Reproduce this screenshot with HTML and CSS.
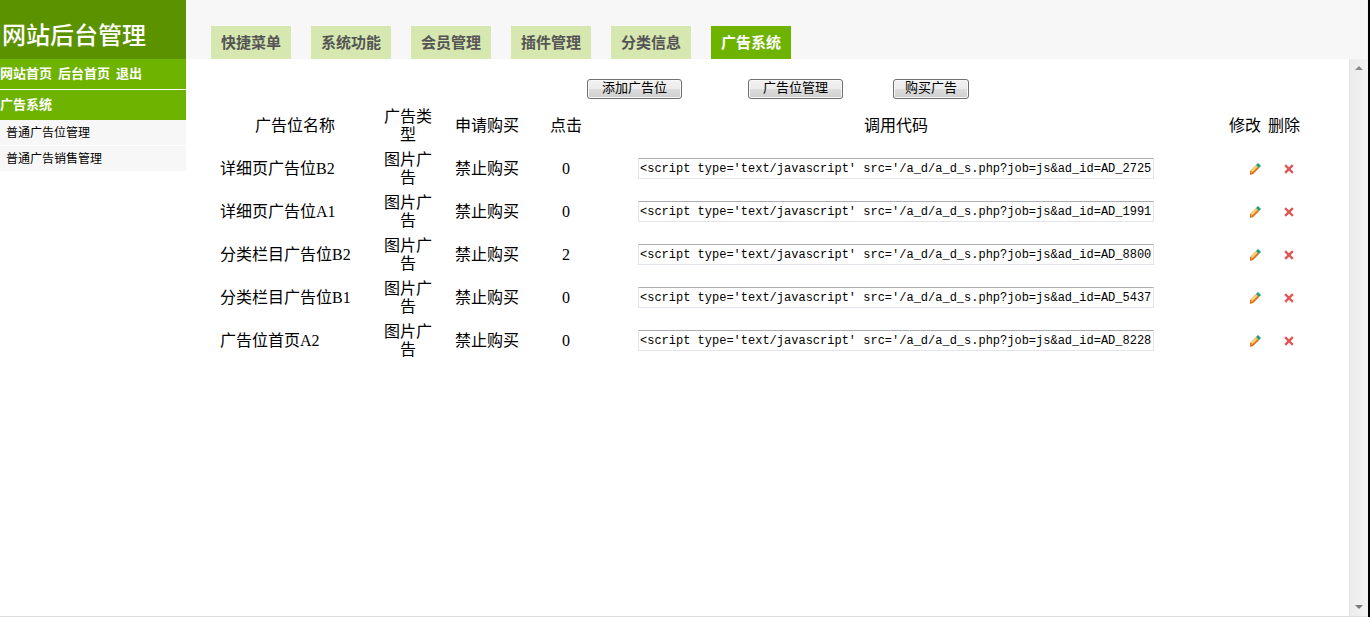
FILE: index.html
```html
<!DOCTYPE html>
<html lang="zh-CN">
<head>
  <meta charset="UTF-8">
  <title>网站后台管理</title>
  <link rel="stylesheet" href="styles.css">
</head>
<body>
  <svg class="defs" width="0" height="0">
    <symbol id="edit" viewBox="0 0 12 12">
      <path d="M1 8L7 2L10 5L4 11L1 11Z" fill="#f7a23b"/>
      <path d="M2 8L7 3L8 4L3 9Z" fill="#ffe08a"/>
      <path d="M3 10L9 4L10 5L4 11Z" fill="#d9711c"/>
      <path d="M7 2L9 0L12 3L10 5Z" fill="#1f9e78"/>
      <path d="M1 8L2 8L4 10L4 11L1 12Z" fill="#e0701c"/>
      <path d="M2 9L3 10L2 10Z" fill="#fff3d0"/>
    </symbol>
    <symbol id="del" viewBox="0 0 10 10">
      <path d="M2 2L8 8M8 2L2 8" stroke="#e05555" stroke-width="2.4" stroke-linecap="square"/>
    </symbol>
  </svg>

  <div class="sidebar">
    <h1>网站后台管理</h1>
    <div class="links">
      <a href="#">网站首页</a>
      <a href="#">后台首页</a>
      <a href="#">退出</a>
    </div>
    <h2>广告系统</h2>
    <ul>
      <li><a href="#">普通广告位管理</a></li>
      <li><a href="#">普通广告销售管理</a></li>
    </ul>
  </div>

  <div class="main">
    <div class="tabs">
      <a href="#">快捷菜单</a>
      <a href="#">系统功能</a>
      <a href="#">会员管理</a>
      <a href="#">插件管理</a>
      <a href="#">分类信息</a>
      <a href="#" class="on">广告系统</a>
    </div>
    <div class="frame">
      <div class="content">
        <div class="buttons">
          <button type="button" class="add">添加广告位</button>
          <button type="button">广告位管理</button>
          <button type="button" class="buy">购买广告</button>
        </div>
        <table>
          <tr>
            <th class="name">广告位名称</th>
            <th class="type">广告类型</th>
            <th class="apply">申请购买</th>
            <th class="click">点击</th>
            <th>调用代码</th>
            <th class="edit">修改</th>
            <th class="del">删除</th>
          </tr>
          <tr>
            <td class="name">详细页广告位B2</td>
            <td class="type">图片广告</td>
            <td>禁止购买</td>
            <td>0</td>
            <td><input type="text" aria-label="调用代码" value="&lt;script type='text/javascript' src='/a_d/a_d_s.php?job=js&amp;ad_id=AD_2725"></td>
            <td class="edit"><a href="#" aria-label="修改"><svg width="12" height="12"><use href="#edit"/></svg></a></td>
            <td class="del"><a href="#" aria-label="删除"><svg width="10" height="10"><use href="#del"/></svg></a></td>
          </tr>
          <tr>
            <td class="name">详细页广告位A1</td>
            <td class="type">图片广告</td>
            <td>禁止购买</td>
            <td>0</td>
            <td><input type="text" aria-label="调用代码" value="&lt;script type='text/javascript' src='/a_d/a_d_s.php?job=js&amp;ad_id=AD_1991"></td>
            <td class="edit"><a href="#" aria-label="修改"><svg width="12" height="12"><use href="#edit"/></svg></a></td>
            <td class="del"><a href="#" aria-label="删除"><svg width="10" height="10"><use href="#del"/></svg></a></td>
          </tr>
          <tr>
            <td class="name">分类栏目广告位B2</td>
            <td class="type">图片广告</td>
            <td>禁止购买</td>
            <td>2</td>
            <td><input type="text" aria-label="调用代码" value="&lt;script type='text/javascript' src='/a_d/a_d_s.php?job=js&amp;ad_id=AD_8800"></td>
            <td class="edit"><a href="#" aria-label="修改"><svg width="12" height="12"><use href="#edit"/></svg></a></td>
            <td class="del"><a href="#" aria-label="删除"><svg width="10" height="10"><use href="#del"/></svg></a></td>
          </tr>
          <tr>
            <td class="name">分类栏目广告位B1</td>
            <td class="type">图片广告</td>
            <td>禁止购买</td>
            <td>0</td>
            <td><input type="text" aria-label="调用代码" value="&lt;script type='text/javascript' src='/a_d/a_d_s.php?job=js&amp;ad_id=AD_5437"></td>
            <td class="edit"><a href="#" aria-label="修改"><svg width="12" height="12"><use href="#edit"/></svg></a></td>
            <td class="del"><a href="#" aria-label="删除"><svg width="10" height="10"><use href="#del"/></svg></a></td>
          </tr>
          <tr>
            <td class="name">广告位首页A2</td>
            <td class="type">图片广告</td>
            <td>禁止购买</td>
            <td>0</td>
            <td><input type="text" aria-label="调用代码" value="&lt;script type='text/javascript' src='/a_d/a_d_s.php?job=js&amp;ad_id=AD_8228"></td>
            <td class="edit"><a href="#" aria-label="修改"><svg width="12" height="12"><use href="#edit"/></svg></a></td>
            <td class="del"><a href="#" aria-label="删除"><svg width="10" height="10"><use href="#del"/></svg></a></td>
          </tr>
        </table>
      </div>
      <div class="scroll">
        <svg width="8" height="4" viewBox="0 0 8 4"><path d="M4 0L8 4H0Z" fill="#8a8a8a"/></svg>
        <svg width="8" height="4" viewBox="0 0 8 4"><path d="M0 0H8L4 4Z" fill="#7a7a7a"/></svg>
      </div>
    </div>
  </div>
</body>
</html>
```
FILE: styles.css
```css
* {
  box-sizing: border-box;
}
body {
  margin: 0;
  min-height: 100vh;
  display: flex;
  border-right: 2px solid #000;
  font-family: "Liberation Serif", "Noto Sans CJK SC", sans-serif;
  font-size: 16px;
  line-height: 18px;
  color: #000;
  background: #fff;
}
a {
  color: inherit;
  text-decoration: none;
}
.defs {
  position: absolute;
}
.sidebar {
  width: 186px;
  flex-shrink: 0;
  border-bottom: 1px solid #ddd;
}
.sidebar h1 {
  margin: 0;
  height: 59px;
  padding: 20px 2px 0;
  font-size: 24px;
  font-weight: 500;
  line-height: 32px;
  color: #fff;
  background: #5b9200;
}
.links, .sidebar h2 {
  margin: 0;
  height: 30px;
  font-size: 13px;
  font-weight: bold;
  line-height: 30px;
  color: #fff;
  background: #6eb300;
}
.links {
  display: flex;
  gap: 6px;
  margin-bottom: 1px;
}
.sidebar ul {
  margin: 0;
  padding: 0;
  list-style: none;
}
.sidebar li {
  height: 25px;
  margin-bottom: 1px;
  padding-left: 6px;
  font-size: 12px;
  line-height: 26px;
  background: #f7f7f7;
}
.main {
  flex: 1;
  display: flex;
  flex-direction: column;
  border-right: 1px solid #f0f0f0;
  border-bottom: 1px solid #ddd;
}
.tabs {
  height: 59px;
  padding: 26px 25px 0;
  display: flex;
  gap: 20px;
  background: #f7f7f7;
}
.tabs a {
  height: 33px;
  padding: 0 10px;
  font-size: 15px;
  font-weight: bold;
  line-height: 35px;
  color: #555;
  background: #d6e7b0;
}
.tabs a.on {
  color: #fff;
  background: #6eb300;
}
.frame {
  flex: 1;
  display: flex;
}
.content {
  flex: 1;
  padding: 20px 45px 0 30px;
}
.buttons {
  display: flex;
  justify-content: center;
  padding-left: 36px;
  margin-bottom: 5px;
}
button {
  height: 20px;
  padding: 0 14px 2px;
  border: 1px solid #707070;
  border-radius: 3px;
  font-family: inherit;
  font-size: 13px;
  line-height: 16px;
  color: #000;
  background: linear-gradient(#f2f2f2, #ebebeb 50%, #dddddd 50%, #cfcfcf);
  box-shadow: inset 0 0 0 1px #f8f8f8;
}
button.add {
  margin-right: 66px;
}
button.buy {
  margin-left: 50px;
  padding: 0 11px 2px;
}
table {
  width: 100%;
  table-layout: fixed;
  border-collapse: collapse;
}
th, td {
  height: 43px;
  padding: 0;
  font-weight: normal;
  text-align: center;
}
.name {
  width: 158px;
}
td.name {
  padding-left: 4px;
  text-align: left;
}
.type {
  width: 68px;
  padding: 0 9px;
}
.apply {
  width: 90px;
}
.click {
  width: 68px;
}
.edit {
  width: 73px;
  padding-right: 4px;
  text-align: right;
}
.del {
  width: 39px;
  padding-right: 4px;
  text-align: right;
}
td.del {
  padding-right: 10px;
}
td svg {
  display: block;
  margin-left: auto;
}
input {
  display: block;
  width: 516px;
  max-width: 100%;
  height: 21px;
  margin: 0 auto;
  padding: 0 1px;
  border: 1px solid #e2e5ec;
  border-top-color: #abadb3;
  font-family: "Liberation Mono", monospace;
  font-size: 12px;
  color: #000;
  background: #fff;
}
.scroll {
  width: 18px;
  padding: 7px 0;
  display: flex;
  flex-direction: column;
  justify-content: space-between;
  align-items: center;
  border-left: 1px solid #e3e3e3;
  background: linear-gradient(to right, #ececec, #f2f2f2);
}
```
